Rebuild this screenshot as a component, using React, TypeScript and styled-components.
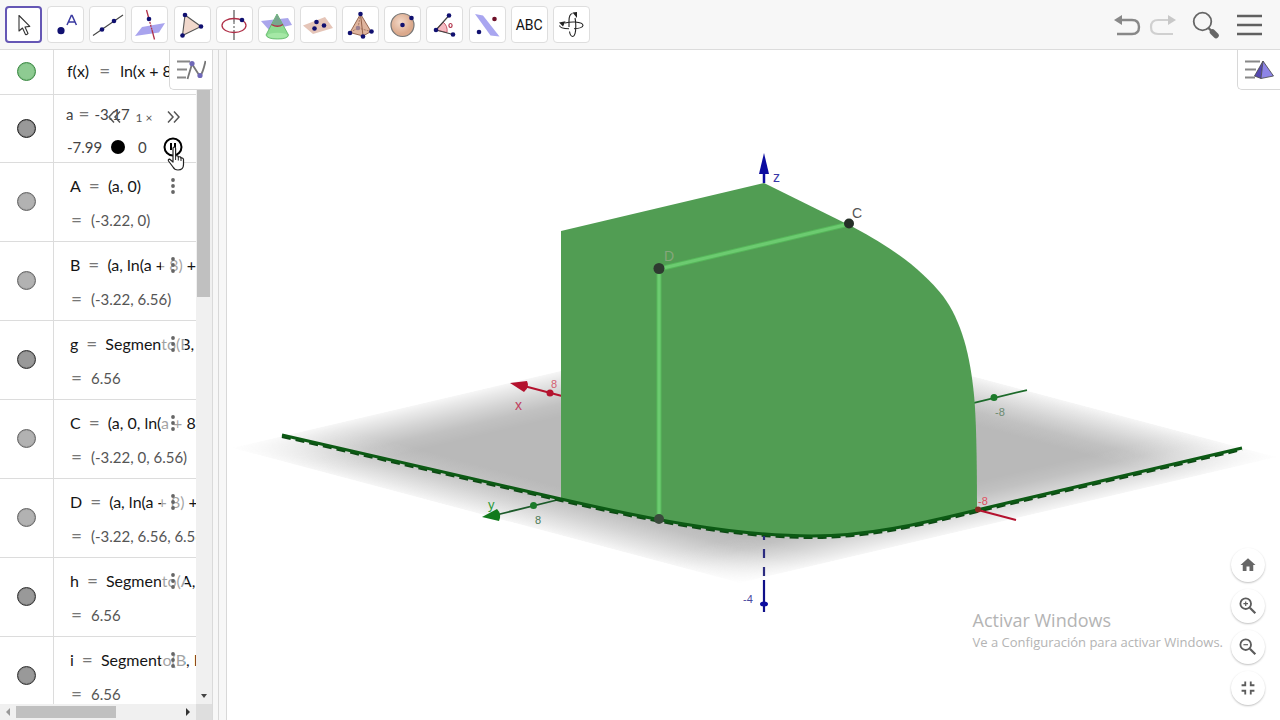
import React from "react";
import styled, { createGlobalStyle, css } from "styled-components";

const GlobalStyle = createGlobalStyle`
  *, *::before, *::after { box-sizing: border-box; }
  body { margin: 0; background: #fff; font-family: Roboto, "Liberation Sans", sans-serif; overflow: hidden; }
  button { padding: 0; border: 0; background: none; font: inherit; color: inherit; cursor: pointer; }
  svg { display: block; }
`;

const Page = styled.div`
  display: flex;
  flex-direction: column;
  height: 100vh;
`;

const Toolbar = styled.header`
  display: flex;
  align-items: center;
  justify-content: space-between;
  flex: none;
  height: 50px;
  padding: 0 16px 0 5px;
  background: #f7f7f7;
  border-bottom: 1px solid #dcdcdc;
`;

const Tools = styled.div`
  display: flex;
  justify-content: space-between;
  width: 585px;
`;

const ToolButton = styled.button<{ $active?: boolean }>`
  display: flex;
  align-items: center;
  justify-content: center;
  width: 37px;
  height: 37px;
  border-radius: 4px;
  background: #fff;
  border: 1px solid #dedede;
  ${(p) => p.$active && css`border: 2px solid #6557b5;`}
`;

const AbcLabel = styled.span`
  font-size: 14px;
  color: #111;
`;

const Actions = styled.div`
  display: flex;
  align-items: center;
  gap: 6px;
`;

const ActionButton = styled.button<{ $spaced?: boolean }>`
  margin-left: ${(p) => (p.$spaced ? 10 : 0)}px;
`;

const Body = styled.main`
  display: flex;
  flex: 1;
  min-height: 0;
`;

const Sidebar = styled.aside`
  position: relative;
  display: grid;
  grid-template-columns: 1fr 16px;
  grid-template-rows: 1fr 16px;
  width: 213px;
  flex: none;
  border-right: 1px solid #dadada;
`;

const Splitter = styled.div`
  flex: none;
  width: 14px;
  background: #f7f7f7;
  border-right: 1px solid #d8d8d8;

  &::before {
    content: "";
    display: block;
    width: 6px;
    height: 100%;
    border-right: 1px solid #d8d8d8;
  }
`;

const List = styled.div`
  overflow: hidden;
  min-height: 0;
`;

const Row = styled.div<{ $h: number }>`
  display: grid;
  grid-template-columns: 54px 1fr;
  height: ${(p) => p.$h}px;
  border-bottom: 1px solid #dcdcdc;
`;

const MarbleCell = styled.div`
  display: flex;
  align-items: center;
  justify-content: center;
  padding-bottom: 1px;
  border-right: 1px solid #dcdcdc;
`;

const Marble = styled.button<{ $fill: string; $edge: string }>`
  width: 19px;
  height: 19px;
  border-radius: 50%;
  background: ${(p) => p.$fill};
  border: 1px solid ${(p) => p.$edge};
  box-shadow: inset 0 0 1px ${(p) => p.$edge};
`;

const Cell = styled.div<{ $top?: number; $left?: number }>`
  position: relative;
  min-width: 0;
  overflow: hidden;
  padding: ${(p) => p.$top ?? 6}px 0 0 ${(p) => p.$left ?? 16}px;
  font-family: Lato, "Open Sans", sans-serif;
  white-space: nowrap;
`;

const Formula = styled.div<{ $small?: boolean; $gap?: number }>`
  display: flex;
  gap: ${(p) => p.$gap ?? 8}px;
  height: 34px;
  line-height: 34px;
  font-size: ${(p) => (p.$small ? 15 : 16)}px;
  color: ${(p) => (p.$small ? "#444" : "#151515")};
`;

const Equals = styled.span`
  font-size: 19px;
  color: #777;
`;

const Result = styled(Formula)`
  padding-left: 1px;
  font-size: 15px;
  color: #555;
`;

const MoreButton = styled.button`
  position: absolute;
  top: 11px;
  right: 11px;
  display: flex;
  justify-content: center;
  width: 24px;
  height: 24px;
  padding-top: 4px;
  background: rgba(255, 255, 255, 0.6);
`;

const SpeedBar = styled.div`
  position: absolute;
  top: 13px;
  right: 16px;
  display: flex;
  align-items: center;
  justify-content: space-between;
  width: 72px;
  height: 18px;
  font-size: 12px;
  color: #555;
`;

const SliderLine = styled.div`
  display: flex;
  align-items: center;
  height: 32px;
  padding-left: 1px;
  font-size: 15px;
  color: #444;
`;

const Bound = styled.span<{ $w: number }>`
  width: ${(p) => p.$w}px;
`;

const Range = styled.input`
  appearance: none;
  width: 16px;
  height: 16px;
  margin: 0 12px 0 0;
  background: transparent;

  &::-webkit-slider-thumb {
    appearance: none;
    width: 14px;
    height: 14px;
    border-radius: 50%;
    background: #000;
  }
`;

const PlayButton = styled.button`
  position: absolute;
  top: 42px;
  right: 13px;
`;

const Pointer = styled.svg`
  position: absolute;
  left: 167px;
  top: 96px;
`;

const VerticalBar = styled.div`
  display: flex;
  flex-direction: column;
  justify-content: space-between;
  align-items: center;
  background: #f0f0f0;
  padding: 0 2px 5px 1px;
`;

const VerticalThumb = styled.div`
  width: 100%;
  height: 38%;
  background: #c0c0c0;
`;

const HorizontalBar = styled.div`
  display: flex;
  align-items: center;
  background: #f0f0f0;
  padding: 0 5px;
`;

const HorizontalThumb = styled.div`
  width: 100px;
  height: 12px;
  margin: 0 auto 0 6px;
  background: #c0c0c0;
`;

const Corner = styled.div`
  background: #dedede;
`;

const StyleButton = styled.button`
  position: absolute;
  top: 0;
  right: 0;
  display: flex;
  align-items: center;
  justify-content: center;
  width: 43px;
  height: 40px;
  background: #fff;
  border: 1px solid #d8d8d8;
  border-top: 0;
  border-right: 0;
  border-bottom-left-radius: 5px;
`;

const View = styled.section`
  position: relative;
  flex: 1;
  min-width: 0;
`;

const Scene = styled.svg`
  width: 100%;
  height: 100%;
  font-family: "Liberation Sans", sans-serif;
`;

const Overlay = styled.div`
  position: absolute;
  right: 15px;
  bottom: 15px;
  display: flex;
  align-items: flex-end;
  gap: 8px;
`;

const Watermark = styled.div`
  padding-bottom: 53px;
  font-family: "Open Sans", sans-serif;
  font-size: 13px;
  line-height: 20px;
  color: #b4b4b4;
`;

const WatermarkTitle = styled.div`
  font-size: 18px;
  line-height: 24px;
`;

const ZoomColumn = styled.div`
  display: flex;
  flex-direction: column;
  gap: 7px;
`;

const RoundButton = styled.button`
  display: flex;
  align-items: center;
  justify-content: center;
  width: 34px;
  height: 34px;
  border-radius: 50%;
  background: #fff;
  box-shadow: 0 1px 2px rgba(0, 0, 0, 0.25);
`;

const NAVY = "#101070";

function Dot({ x, y, fill = NAVY, r = 2.3 }: { x: number; y: number; fill?: string; r?: number }) {
  return <circle cx={x} cy={y} r={r} fill={fill} />;
}

function Icon({ children }: { children: React.ReactNode }) {
  return (
    <svg width="32" height="32" viewBox="0 0 32 32" fill="none" aria-hidden="true">
      {children}
    </svg>
  );
}

const tools: { name: string; icon: React.ReactNode }[] = [
  {
    name: "Mover",
    icon: <path d="M11 6.500v15.500l3.500-3 3 6.400q1.500.6 2.500-1l-3-6.400 4.800-.6z" stroke="#333" strokeWidth="1.100" fill="#fff" strokeLinejoin="round" />,
  },
  {
    name: "Punto",
    icon: (
      <>
        <circle cx="11" cy="21.700" r="3.600" fill={NAVY} />
        <path d="M17 16l4.300-9.500h.8l4.300 9.500M18.500 13h6.400" stroke="#3a3aa0" strokeWidth="1.500" />
      </>
    ),
  },
  {
    name: "Recta",
    icon: (
      <>
        <path d="M1 26.500L31 6" stroke="#444" strokeWidth="1.100" />
        <Dot x={10} y={20.5} /><Dot x={22} y={12} />
      </>
    ),
  },
  {
    name: "Recta perpendicular",
    icon: (
      <>
        <path d="M1 27l7-9 23-4-6 9.500z" fill="#a9a4ee" />
        <path d="M12.500 1l2.500 9" stroke="#b03048" strokeWidth="1.300" />
        <path d="M15 10l3 11" stroke="#b03048" strokeWidth="1.300" strokeDasharray="2 1" />
        <path d="M18 21l2.500 9.500" stroke="#b03048" strokeWidth="1.300" />
        <Dot x={15} y={10} />
      </>
    ),
  },
  {
    name: "Polígono",
    icon: (
      <>
        <path d="M9 6l16 11.500L6.500 26.500z" fill="#f1d8cc" stroke="#555" strokeWidth="1.100" />
        <Dot x={9} y={6} /><Dot x={25} y={17.5} /><Dot x={6.5} y={26.5} />
      </>
    ),
  },
  {
    name: "Circunferencia",
    icon: (
      <>
        <path d="M16 1v12M16 21v10" stroke="#777" strokeWidth="1.500" />
        <path d="M16 13v8" stroke="#777" strokeWidth="1.300" strokeDasharray="2 2" />
        <ellipse cx="16" cy="16.500" rx="12" ry="7" stroke="#b03048" strokeWidth="1.300" />
        <Dot x={24} y={11} />
      </>
    ),
  },
  {
    name: "Intersección",
    icon: (
      <>
        <path d="M1 12l27-3 4 7-23 5z" fill="#aaa6ec" />
        <path d="M17 5L6 26q1 4 11.500 4t11-4z" fill="#8edb92" stroke="#57b45f" strokeWidth=".8" />
        <path d="M17 5l-5 10.500q5 3 10.500 0z" fill="#78a58e" />
        <ellipse cx="17.500" cy="26.500" rx="10" ry="2.800" fill="#a5e8a6" />
        <path d="M11.500 15.500q6 3.500 11.500 0" stroke="#b03048" strokeWidth="1.300" />
      </>
    ),
  },
  {
    name: "Plano",
    icon: (
      <>
        <path d="M1 16.500L23 8l8 11-20 6z" fill="#e5c5b8" />
        <Dot x={14.5} y={13} /><Dot x={22} y={16.5} /><Dot x={12.5} y={19.5} />
      </>
    ),
  },
  {
    name: "Pirámide",
    icon: (
      <>
        <path d="M15.500 5L5 23.500 18 27l8-4.500z" fill="#dfb49d" stroke="#8b5a43" strokeWidth=".9" />
        <path d="M15.500 5L18 27" stroke="#8b5a43" strokeWidth=".9" />
        <path d="M15.500 5L13 19l-8 4.500M13 19l13 3.500" stroke="#9a6b57" strokeWidth=".8" strokeDasharray="2 1" />
        <Dot x={15.5} y={5} /><Dot x={5} y={24} /><Dot x={18} y={27.5} /><Dot x={26.5} y={22.5} />
        <Dot x={13} y={19} fill="#9b7f91" />
      </>
    ),
  },
  {
    name: "Esfera",
    icon: (
      <>
        <circle cx="15.500" cy="16" r="11.500" fill="url(#ball)" stroke="#777" strokeWidth="1.200" />
        <Dot x={15.5} y={16} /><Dot x={24.5} y={9} />
        <defs>
          <radialGradient id="ball" cx=".42" cy=".38">
            <stop offset="0" stopColor="#f3d9c9" />
            <stop offset="1" stopColor="#dba98c" />
          </radialGradient>
        </defs>
      </>
    ),
  },
  {
    name: "Ángulo",
    icon: (
      <>
        <path d="M7 21l7-8q5 4 4 10.500z" fill="#f6b9c0" stroke="#c04a5c" strokeWidth=".9" />
        <path d="M20 6.500L7 21l17 4.500" stroke="#444" strokeWidth="1.200" />
        <ellipse cx="21.500" cy="16.500" rx="1.600" ry="2" stroke="#b03048" strokeWidth="1.200" />
        <Dot x={20} y={6.5} /><Dot x={7} y={21} /><Dot x={24} y={25.5} />
      </>
    ),
  },
  {
    name: "Simetría",
    icon: (
      <>
        <path d="M4 5l8 1.500 16.500 21-9-1z" fill="#a9a6f0" />
        <Dot x={23.5} y={10} fill="#6e0f28" /><Dot x={8} y={23} />
      </>
    ),
  },
  { name: "Texto", icon: null },
  {
    name: "Rota vista gráfica 3D",
    icon: (
      <>
        <path d="M14 18V12q0-7 3.500-7.500M20 9q.8 3 .8 8 0 10-3 10.500-2.500 0-3.300-5" stroke="#222" strokeWidth="1.100" />
        <path d="M10 14q5-1.300 10-1 8 .6 8 3.500-.5 2.800-9 3.300M14 19.800Q5 19.500 4.500 16.500" stroke="#222" strokeWidth="1.100" />
        <path d="M17.500 3.500l4.500 5.500V3zM4 13.500l6.500-1.200-2.500 5.200z" fill="#222" />
      </>
    ),
  },
];

type Item = { name: string; value: string; result: string; dark?: boolean };

const items: Item[] = [
  { name: "A", value: "(a, 0)", result: "(-3.22, 0)" },
  { name: "B", value: "(a, ln(a + 8) + 5)", result: "(-3.22, 6.56)" },
  { name: "g", value: "Segmento(B, A)", result: "6.56", dark: true },
  { name: "C", value: "(a, 0, ln(a + 8) + 5)", result: "(-3.22, 0, 6.56)" },
  { name: "D", value: "(a, ln(a + 8) + 5, 0)", result: "(-3.22, 6.56, 6.56)" },
  { name: "h", value: "Segmento(A, C)", result: "6.56", dark: true },
  { name: "i", value: "Segmento(B, D)", result: "6.56", dark: true },
];

function MoreDots() {
  return (
    <svg width="6" height="16" viewBox="0 0 6 16" fill="#666" aria-hidden="true">
      <circle cx="3" cy="2" r="1.900" /><circle cx="3" cy="8" r="1.900" /><circle cx="3" cy="14" r="1.900" />
    </svg>
  );
}

function Chevrons({ flip }: { flip?: boolean }) {
  return (
    <svg width="13" height="12" viewBox="0 0 13 12" fill="none" stroke="#555" strokeWidth="1.500" aria-hidden="true">
      <path d={flip ? "M6 .5L1 6l5 5.500M12 .5L7 6l5 5.500" : "M1 .5L6 6l-5 5.500M7 .5L12 6l-5 5.500"} />
    </svg>
  );
}

function AlgebraPanel() {
  return (
    <Sidebar>
      <List>
        <Row $h={45}>
          <MarbleCell><Marble $fill="#8ecb92" $edge="#3c8a44" aria-label="Mostrar f" /></MarbleCell>
          <Cell $top={4} $left={13}>
            <Formula $gap={10}><span>f(x)</span><Equals>=</Equals><span>ln(x + 8) + 5</span></Formula>
          </Cell>
        </Row>
        <Row $h={68}>
          <MarbleCell><Marble $fill="#999" $edge="#222" aria-label="Mostrar a" /></MarbleCell>
          <Cell $top={2} $left={12}>
            <Formula $small $gap={5}><span>a</span><Equals>=</Equals><span>-3.17</span></Formula>
            <SliderLine>
              <Bound $w={43}>-7.99</Bound>
              <Range type="range" min="-7.99" max="0" step="0.01" defaultValue="-3.17" aria-label="a" />
              <span>0</span>
            </SliderLine>
            <SpeedBar>
              <button aria-label="Más lento"><Chevrons flip /></button>
              <span>1 ×</span>
              <button aria-label="Más rápido"><Chevrons /></button>
            </SpeedBar>
            <PlayButton aria-label="Pausa">
              <svg width="20" height="20" viewBox="0 0 20 20" fill="none" stroke="#000">
                <circle cx="10" cy="10" r="8.500" strokeWidth="2" />
                <path d="M8 6v7M12 6v7" strokeWidth="2" />
              </svg>
            </PlayButton>
          </Cell>
        </Row>
        {items.map((it) => (
          <Row key={it.name} $h={79}>
            <MarbleCell>
              <Marble $fill={it.dark ? "#999" : "#b2b2b2"} $edge={it.dark ? "#333" : "#666"} aria-label={`Mostrar ${it.name}`} />
            </MarbleCell>
            <Cell>
              <Formula><span>{it.name}</span><Equals>=</Equals><span>{it.value}</span></Formula>
              <Result $gap={9}><Equals>=</Equals><span>{it.result}</span></Result>
              <MoreButton aria-label="Más"><MoreDots /></MoreButton>
            </Cell>
          </Row>
        ))}
      </List>
      <VerticalBar>
        <VerticalThumb />
        <svg width="8" height="5" viewBox="0 0 8 5" fill="#444"><path d="M1 0h6L4 4z" /></svg>
      </VerticalBar>
      <HorizontalBar>
        <svg width="5" height="8" viewBox="0 0 5 8" fill="#999"><path d="M5 0v8L1 4z" /></svg>
        <HorizontalThumb />
        <svg width="5" height="8" viewBox="0 0 5 8" fill="#333"><path d="M0 0v8l4-4z" /></svg>
      </HorizontalBar>
      <Corner />
      <StyleButton aria-label="Barra de estilo">
        <svg width="30" height="24" viewBox="0 0 30 24" fill="none" aria-hidden="true">
          <path d="M1 3.500h13M1 11.500h10M1 19.500h9" stroke="#888" strokeWidth="2" />
          <path d="M11.500 21L16 6l8 12.500q3-4 5.500-15.500" stroke="#777" strokeWidth="1.800" />
          <circle cx="16" cy="5.500" r="2.600" fill="#6f68b8" /><circle cx="24" cy="17.500" r="2.600" fill="#6f68b8" />
        </svg>
      </StyleButton>
      <Pointer width="20" height="26" viewBox="0 0 20 26" aria-hidden="true">
        <path d="M6 2.500q0-1.500 1.300-1.500T8.600 2.500V10q2.400-.8 2.700.9 2.300-.6 2.700 1.100 2.300-.3 2.500 1.500v5q0 5.500-5.500 5.500-3.500 0-5-3L1.500 15q-.7-2 1.300-1.800L6 16z" fill="#fff" stroke="#222" strokeWidth="1.200" strokeLinejoin="round" />
        <path d="M8.600 10v4M11.300 11v3.500M14 12v3" stroke="#222" />
      </Pointer>
    </Sidebar>
  );
}

const CURVE = "M282 435L561 499C640 517 730 536 812 536C868 536 920 524 977 510L1242 448";

function fadeStops(color: string) {
  return [
    [0, 0.12], [0.03, 0.32], [0.08, 0.62], [0.13, 0.88], [0.18, 1], [0.82, 1], [0.87, 0.88], [0.92, 0.62], [0.97, 0.32], [1, 0.12],
  ].map(([o, a]) => <stop key={o} offset={o} stopColor={color} stopOpacity={a} />);
}

function GraphicsView() {
  return (
    <View>
      <Scene viewBox="227 50 1053 670" role="img" aria-label="Vista gráfica 3D">
        <defs>
          <linearGradient id="fadeU" x1="0" y1="0" x2="1" y2="0">{fadeStops("#b9b9b9")}</linearGradient>
          <linearGradient id="fadeV" x1="0" y1="0" x2="0" y2="1">{fadeStops("#fff")}</linearGradient>
          <mask id="edges" maskContentUnits="userSpaceOnUse"><rect width="1" height="1" fill="url(#fadeV)" /></mask>
        </defs>
        <g transform="matrix(537 -126 508 135 232 448)">
          <rect width="1" height="1" fill="url(#fadeU)" mask="url(#edges)" />
        </g>

        <g stroke="#b4122e" fill="#b4122e">
          <path d="M524 386L562 396" strokeWidth="2" />
          <path d="M510 383L527 381Q530 387 524 392Z" stroke="none" />
          <circle cx="550" cy="393" r="3.500" stroke="none" />
        </g>
        <path d="M973 403L1027 390" stroke="#1c6a2a" strokeWidth="1.800" />
        <circle cx="994" cy="397.500" r="3.500" fill="#1c7a2a" />
        <path d="M561 499L496 515" stroke="#1c5a2a" strokeWidth="1.800" />
        <path d="M482 517L497 509Q502 514 499 521Z" fill="#117a1c" />
        <circle cx="533.500" cy="505.500" r="3.500" fill="#1c7a2a" />

        <path
          d="M561 231L764 183L853 227C895 249 923 271 943 296C962 322 970 355 974 395Q977 425 977 510C920 524 868 536 812 536C730 536 640 517 561 499Z"
          fill="#519d53"
        />

        <path d={CURVE} transform="translate(0 1.500)" fill="none" stroke="#0d4a14" strokeWidth="3" strokeDasharray="9 5" />
        <path d={CURVE} fill="none" stroke="#0c5a14" strokeWidth="3" />

        <path d="M659 518V269L849 224" fill="none" stroke="#56b75a" strokeWidth="5" />
        <path d="M659 518V269L849 224" fill="none" stroke="#6ccb70" strokeWidth="3" />
        <circle cx="659" cy="268.500" r="5.500" fill="#2e3a30" />
        <circle cx="849" cy="223.500" r="5" fill="#263028" />
        <circle cx="659" cy="519" r="5" fill="#3a4a3c" />

        <path d="M764 183V172" stroke="#0c0ca0" strokeWidth="2.500" />
        <path d="M764 153L769 174H759Z" fill="#0c0ca0" />
        <path d="M764 536V578" stroke="#2c2c80" strokeWidth="2.200" strokeDasharray="9 9" strokeDashoffset="5" />
        <path d="M764 580V612" stroke="#10108a" strokeWidth="2.200" />
        <ellipse cx="764" cy="604" rx="4" ry="2.500" fill="#0c0ca0" />

        <path d="M978 510L1016 520" stroke="#b4122e" strokeWidth="2" />
        <circle cx="978" cy="509.500" r="3" fill="#8a2a20" />

        <text x="773" y="182" fontSize="14" fill="#3838a8">z</text>
        <text x="852" y="218" fontSize="14" fill="#555">C</text>
        <text x="664" y="261" fontSize="14" fill="#86a67c">D</text>
        <text x="515" y="410" fontSize="14" fill="#c04060">x</text>
        <text x="488" y="509" fontSize="13" fill="#2c9a3a">y</text>
        <text x="551" y="388" fontSize="11" fill="#d46070">8</text>
        <text x="535" y="524" fontSize="11" fill="#4a7a54">8</text>
        <text x="995" y="416" fontSize="11" fill="#6a8a70">-8</text>
        <text x="978" y="505" fontSize="11" fill="#e05060">-8</text>
        <text x="743" y="603" fontSize="11" fill="#4848a0">-4</text>
      </Scene>

      <StyleButton aria-label="Barra de estilo 3D">
        <svg width="30" height="24" viewBox="0 0 30 24" fill="none" aria-hidden="true">
          <path d="M1 3.500h15M1 11.500h11M1 19.500h10" stroke="#888" strokeWidth="2" />
          <path d="M19 3L10.500 18 17 20.500z" fill="#5548b0" />
          <path d="M19 3l-2 17.500 12.500-2.500z" fill="#8d84e6" />
          <path d="M19 3L10.500 18l6.500 2.500 12.500-2.500zl-2 17.500" stroke="#444" strokeWidth=".8" />
        </svg>
      </StyleButton>

      <Overlay>
        <Watermark>
          <WatermarkTitle>Activar Windows</WatermarkTitle>
          Ve a Configuración para activar Windows.
        </Watermark>
        <ZoomColumn>
          <RoundButton aria-label="Vista estándar">
            <svg width="18" height="18" viewBox="0 0 24 24" fill="#666"><path d="M10 20v-6h4v6h5v-8h3L12 3 2 12h3v8z" /></svg>
          </RoundButton>
          <RoundButton aria-label="Acercar">
            <svg width="22" height="22" viewBox="0 0 24 24" fill="none" stroke="#5c5c5c" strokeWidth="2">
              <circle cx="9.500" cy="9.500" r="5.800" /><path d="M14 14l6 6" strokeWidth="2.400" /><path d="M9.500 7v5M7 9.500h5" strokeWidth="1.300" />
            </svg>
          </RoundButton>
          <RoundButton aria-label="Alejar">
            <svg width="22" height="22" viewBox="0 0 24 24" fill="none" stroke="#5c5c5c" strokeWidth="2">
              <circle cx="9.500" cy="9.500" r="5.800" /><path d="M14 14l6 6" strokeWidth="2.400" /><path d="M7 9.500h5" strokeWidth="1.300" />
            </svg>
          </RoundButton>
          <RoundButton aria-label="Salir de pantalla completa">
            <svg width="22" height="22" viewBox="0 0 24 24" fill="#5c5c5c"><path d="M5 16h3v3h2v-5H5zm3-8H5v2h5V5H8zm6 11h2v-3h3v-2h-5zm2-11V5h-2v5h5V8z" /></svg>
          </RoundButton>
        </ZoomColumn>
      </Overlay>
    </View>
  );
}

export default function App() {
  return (
    <Page>
      <GlobalStyle />
      <Toolbar>
        <Tools>
          {tools.map((t, i) => (
            <ToolButton key={t.name} $active={i === 0} aria-label={t.name}>
              {t.icon ? <Icon>{t.icon}</Icon> : <AbcLabel>ABC</AbcLabel>}
            </ToolButton>
          ))}
        </Tools>
        <Actions>
          <ActionButton aria-label="Deshacer">
            <svg width="28" height="28" viewBox="0 0 28 28" fill="none">
              <path d="M6 9h12q7 0 7 7t-7 7H3" stroke="#888" strokeWidth="2.400" /><path d="M0 9l8-5v10z" fill="#888" />
            </svg>
          </ActionButton>
          <ActionButton aria-label="Rehacer">
            <svg width="28" height="28" viewBox="0 0 28 28" fill="none">
              <path d="M22 9H10q-7 0-7 7t7 7h15" stroke="#d0d0d0" strokeWidth="2.200" /><path d="M28 9l-8-5v10z" fill="#c8c8c8" />
            </svg>
          </ActionButton>
          <ActionButton $spaced aria-label="Buscar">
            <svg width="28" height="28" viewBox="0 0 28 28" fill="none">
              <circle cx="10.500" cy="10.500" r="8.800" stroke="#666" strokeWidth="1.800" />
              <path d="M16.500 17l3 3" stroke="#666" strokeWidth="2.400" />
              <path d="M20.500 21l3.500 3.500" stroke="#666" strokeWidth="5.500" strokeLinecap="round" />
            </svg>
          </ActionButton>
          <ActionButton $spaced aria-label="Menú">
            <svg width="28" height="28" viewBox="0 0 28 28"><path d="M1 5h25M1 14h25M1 23h25" stroke="#606060" strokeWidth="2.600" /></svg>
          </ActionButton>
        </Actions>
      </Toolbar>
      <Body>
        <AlgebraPanel />
        <Splitter />
        <GraphicsView />
      </Body>
    </Page>
  );
}
